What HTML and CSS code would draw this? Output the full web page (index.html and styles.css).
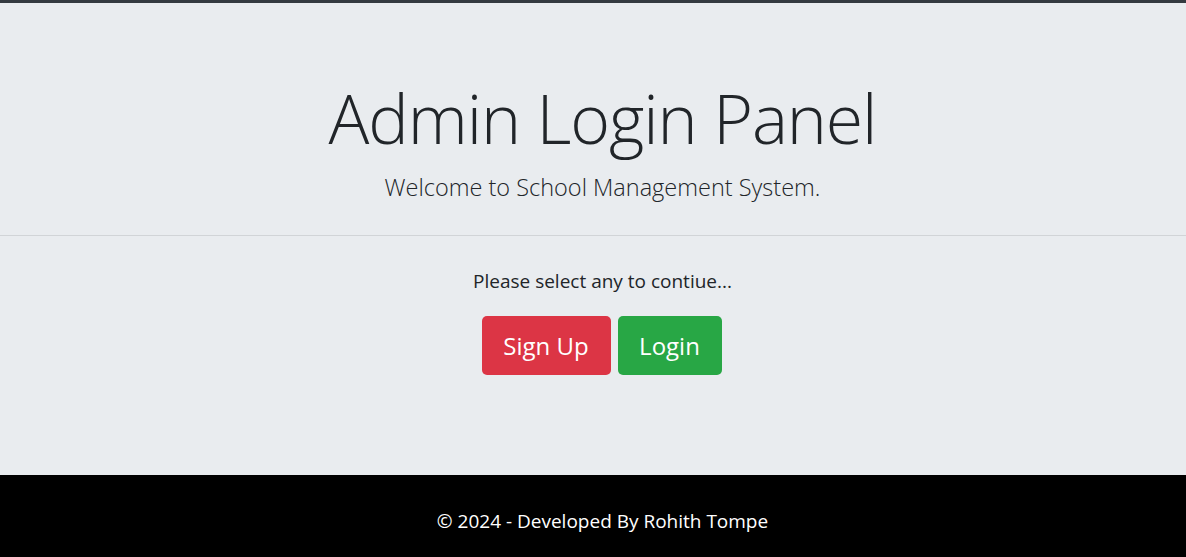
FILE: index.html
```html
<!DOCTYPE html>
<html lang="en">
<head>
<meta charset="utf-8">
<title>Admin Login Panel</title>
<link rel="stylesheet" href="styles.css">
</head>
<body>
<div class="page">
  <header class="hero">
    <h1 class="title">Admin Login Panel</h1>
    <p class="lead">Welcome to School Management System.</p>
  </header>
  <main class="choice">
    <p class="prompt">Please select any to contiue...</p>
    <div class="actions">
      <a class="btn btn-red" href="#">Sign Up</a>
      <a class="btn btn-green" href="#">Login</a>
    </div>
  </main>
  <footer class="footer">© 2024 - Developed By Rohith Tompe</footer>
</div>
</body>
</html>
```
FILE: styles.css
```css
html, body {
  margin: 0;
  padding: 0;
}
body {
  background: #e9ecef;
  border-top: 3px solid #343a40;
  font-family: "Open Sans", "Noto Sans", sans-serif;
  color: #212529;
}
.hero {
  text-align: center;
  padding: 72px 0 30px 19px;
  border-bottom: 1px solid #d1d4d7;
}
.title {
  margin: 0;
  font-size: 68px;
  font-weight: 300;
  line-height: 86px;
  letter-spacing: -1.1px;
}
.lead {
  margin: 8px 0 0;
  font-size: 23.5px;
  font-weight: 300;
  line-height: 36px;
}
.choice {
  text-align: center;
  padding: 32px 0 100px 17px;
}
.prompt {
  margin: 0 0 0 2px;
  font-size: 19px;
  line-height: 27px;
}
.actions {
  display: flex;
  justify-content: center;
  gap: 7px;
  margin-top: 21px;
}
.btn {
  display: flex;
  align-items: center;
  justify-content: center;
  height: 59px;
  border-radius: 5px;
  color: #fff;
  text-decoration: none;
  font-size: 24px;
}
.btn-red {
  background: #dc3545;
  width: 129px;
}
.btn-green {
  background: #28a745;
  width: 104px;
}
.footer {
  background: #000;
  color: #fff;
  text-align: center;
  padding: 34px 0 34px 19px;
  font-size: 19px;
  line-height: 24px;
}
```
